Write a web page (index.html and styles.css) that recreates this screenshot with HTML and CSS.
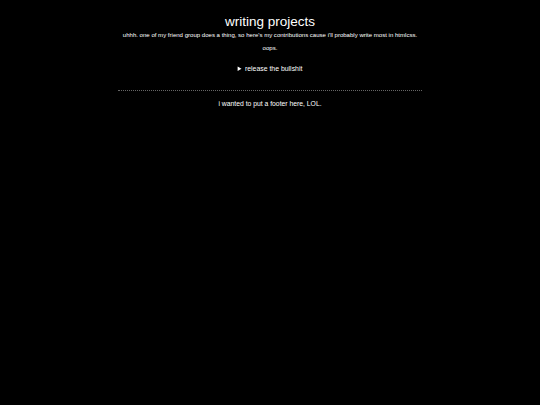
FILE: index.html
```html
<!DOCTYPE html>
<html>
<head>
<meta charset="utf-8">
<link rel="stylesheet" href="styles.css">
</head>
<body>
<div class="wrap">
  <h1 class="title">writing projects</h1>
  <p class="sub">uhhh. one of my friend group does a thing, so here's my contributions cause i'll probably write most in htmlcss.</p>
  <p class="sub oops">oops.</p>
  <details class="bs">
    <summary>release the bullshit</summary>
  </details>
  <hr class="rule">
  <p class="footer">i wanted to put a footer here, LOL.</p>
</div>
</body>
</html>
```
FILE: styles.css
```css
html, body {
  margin: 0;
  background: #000;
  color: #fff;
  font-family: "Liberation Sans", Arial, sans-serif;
}
.wrap {
  width: 304px;
  margin: 0 auto;
  padding-top: 14px;
  text-align: center;
}
.title {
  margin: 0;
  font-size: 13.5px;
  line-height: 16px;
  font-weight: normal;
}
.sub {
  margin: 1px 0 0;
  font-size: 6.05px;
  line-height: 8px;
}
.oops {
  margin-top: 5px;
}
.bs {
  margin-top: 13px;
  font-size: 6.9px;
  line-height: 8px;
}
.bs summary {
  cursor: pointer;
}
.rule {
  margin: 17px 0 0;
  border: 0;
  border-top: 1px dotted #666;
  height: 0;
}
.footer {
  margin: 8px 0 0;
  font-size: 6.8px;
  line-height: 10px;
}
```
